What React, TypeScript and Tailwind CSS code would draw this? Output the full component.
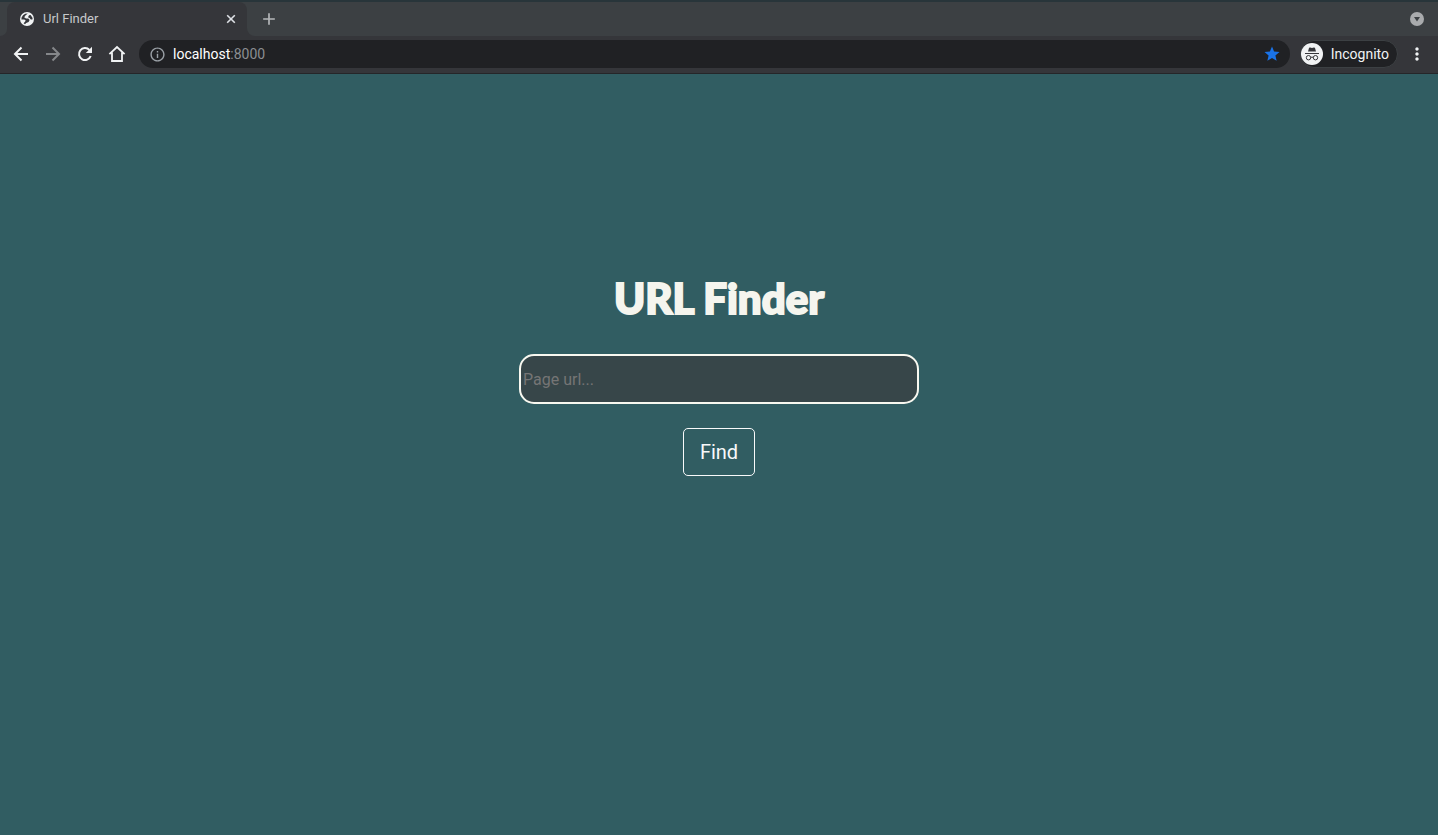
import React from "react";
import { MdAdd, MdInfoOutline, MdMoreVert, MdStar } from "react-icons/md";

function GlobeIcon() {
  return (
    <svg viewBox="0 0 14 14" className="size-3.5 shrink-0" aria-hidden="true">
      <circle cx="7" cy="7" r="7" fill="#f1f3f4" />
      <path
        d="M7.8 1.6 5.4 3.4 4.2 5.2 6 6.4 8.3 6.6 9.6 8 8.6 10 6.2 10.9 5 12.2 3.6 11.2 5.2 9.4 5.6 8.2 4.2 7.6 1.4 7.4 1.6 5.4 3 3.2 5.2 1.8z"
        fill="#35363a"
      />
      <path d="M9 3.2 10.6 3 12.6 6 12.4 7.6 10.8 7.4 9.6 6 8 5.2z" fill="#35363a" />
    </svg>
  );
}

function CloseIcon() {
  return (
    <svg viewBox="0 0 10 10" className="size-2.5" aria-hidden="true">
      <path d="m1.2 1.2 7.6 7.6M8.8 1.2 1.2 8.8" stroke="currentColor" strokeWidth="1.6" />
    </svg>
  );
}

function ArrowIcon({ className = "" }: { className?: string }) {
  return (
    <svg viewBox="0 0 20 20" className={`size-5 ${className}`} fill="none" stroke="currentColor" strokeWidth="2" aria-hidden="true">
      <path d="M17 10H4.5M10.5 3.5 4 10l6.5 6.5" />
    </svg>
  );
}

function ReloadIcon() {
  return (
    <svg viewBox="0 0 20 20" className="size-5" aria-hidden="true">
      <path d="M15.7 12A6 6 0 1 1 14.4 5.9" fill="none" stroke="currentColor" strokeWidth="2" />
      <path d="M17 2.8V9h-6.2z" fill="currentColor" />
    </svg>
  );
}

function HomeIcon() {
  return (
    <svg viewBox="0 0 18 18" className="size-4.5" fill="none" stroke="currentColor" strokeWidth="1.8" aria-hidden="true">
      <path d="M1.4 9.2 9 2l7.6 7.2M4 7.5V16h10V7.5" />
    </svg>
  );
}

function IncognitoIcon() {
  return (
    <svg viewBox="0 0 22 22" className="size-5.5 shrink-0" aria-hidden="true">
      <circle cx="11" cy="11" r="11" fill="#f1f3f4" />
      <path d="M7 8.6 8 5.1Q8.3 4.3 9.1 4.6L11 5.1l1.9-.5q.8-.3 1.1.5l1 3.5z" fill="#35363a" />
      <path d="M4 10.5h14" stroke="#35363a" strokeWidth="1" />
      <g fill="none" stroke="#35363a" strokeWidth="1">
        <circle cx="7.5" cy="14.7" r="2.2" />
        <circle cx="14.5" cy="14.7" r="2.2" />
        <path d="M9.7 14.4q1.3-.6 2.6 0" />
      </g>
    </svg>
  );
}

function TabSearchIcon() {
  return (
    <svg viewBox="0 0 14 14" className="size-3.5" aria-hidden="true">
      <circle cx="7" cy="7" r="7" fill="#a9abad" />
      <path d="M4 5h6L7 9.5z" fill="#3c4043" />
    </svg>
  );
}

function TabStrip() {
  return (
    <div className="flex h-9 items-stretch border-t-2 border-[#28353a] bg-[#3c4043] pr-3.5">
      <div className="flex w-[7px] bg-[#35363a]">
        <div className="flex-1 rounded-br-lg bg-[#3c4043]" />
      </div>
      <div className="flex w-60 items-center rounded-t-lg bg-[#35363a] pl-[13px] pr-[11px]">
        <GlobeIcon />
        <span className="ml-[9px] flex-1 text-[13px] leading-5 text-[#c7c9cb]">Url Finder</span>
        <button aria-label="Close tab" className="text-[#dee1e6]">
          <CloseIcon />
        </button>
      </div>
      <div className="flex w-2 bg-[#35363a]">
        <div className="flex-1 rounded-bl-lg bg-[#3c4043]" />
      </div>
      <button aria-label="New tab" className="ml-1 text-[#b5b8ba]">
        <MdAdd size={20} />
      </button>
      <button aria-label="Search tabs" className="ml-auto">
        <TabSearchIcon />
      </button>
    </div>
  );
}

function Toolbar() {
  return (
    <div className="flex h-[38px] items-center border-b border-[#252629] bg-[#35363a] pb-px pl-[11px] pr-[11px] text-[#f1f3f4]">
      <div className="flex items-center gap-3">
        <button aria-label="Back">
          <ArrowIcon />
        </button>
        <button aria-label="Forward" className="text-[#85878a]">
          <ArrowIcon className="rotate-180" />
        </button>
        <button aria-label="Reload">
          <ReloadIcon />
        </button>
        <button aria-label="Home" className="flex w-5 justify-center">
          <HomeIcon />
        </button>
      </div>
      <div className="ml-3 flex h-7 flex-1 items-center rounded-full bg-[#202124] pl-2.5 pr-[9px]">
        <MdInfoOutline size={17} className="text-[#9aa0a6]" />
        <span className="ml-[7px] flex-1 text-[14px] text-white">
          localhost<span className="text-[#8b8e92]">:8000</span>
        </span>
        <button aria-label="Bookmark this page" className="text-[#1a73e8]">
          <MdStar size={18} />
        </button>
      </div>
      <button className="ml-2.5 flex h-7 items-center gap-2 rounded-full border border-[#3c4043] bg-[#202124] pr-2 text-[14px] text-[#f1f3f4]">
        <IncognitoIcon />
        Incognito
      </button>
      <button aria-label="Menu" className="ml-[9px]">
        <MdMoreVert size={20} />
      </button>
    </div>
  );
}

export default function App() {
  return (
    <div className="flex min-h-screen flex-col bg-[#315d62] font-[Roboto,sans-serif]">
      <header>
        <TabStrip />
        <Toolbar />
      </header>
      <main className="flex flex-1 flex-col items-center px-4 pt-[198px]">
        <h1 className="font-[Lato,sans-serif] text-[42px] leading-[52px] font-black text-[#f5f5ee] [-webkit-text-stroke:2px_#f5f5ee]">
          URL Finder
        </h1>
        <form className="mt-[30px] flex w-full flex-col items-center gap-6" onSubmit={(e) => e.preventDefault()}>
          <input
            type="text"
            aria-label="Page url"
            placeholder="Page url..."
            className="h-[50px] w-full max-w-[400px] rounded-[15px] border-2 border-[#f8f8f0] bg-[#374649] px-0.5 text-base text-white placeholder:text-[#757575]"
          />
          <button type="submit" className="h-12 rounded-[5px] border border-[#f8f9fa] px-4 text-xl text-[#f8f9fa]">
            Find
          </button>
        </form>
      </main>
    </div>
  );
}
